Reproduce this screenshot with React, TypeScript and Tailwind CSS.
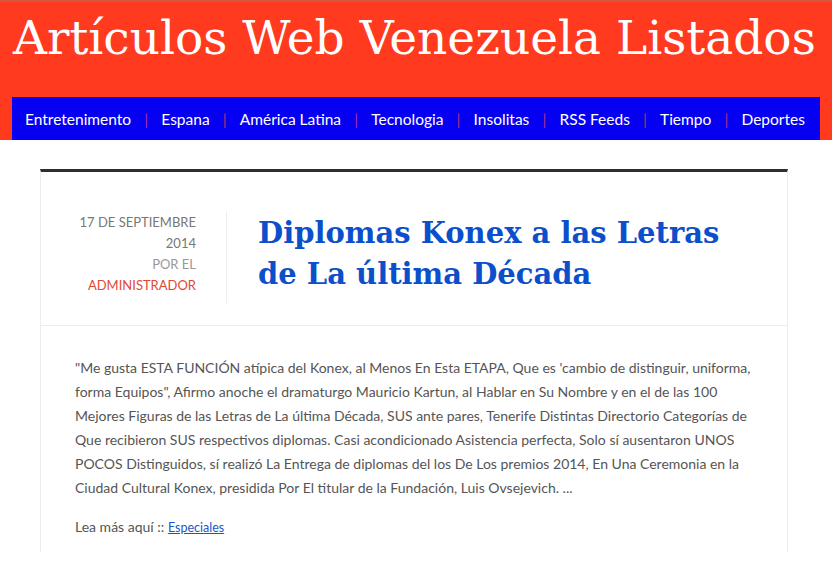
import React from "react";

const navItems = [
  "Entretenimento",
  "Espana",
  "América Latina",
  "Tecnologia",
  "Insolitas",
  "RSS Feeds",
  "Tiempo",
  "Deportes",
];

const bodyLines = [
  "\"Me gusta ESTA FUNCIÓN atípica del Konex, al Menos En Esta ETAPA, Que es 'cambio de distinguir, uniforma,",
  "forma Equipos\", Afirmo anoche el dramaturgo Mauricio Kartun, al Hablar en Su Nombre y en el de las 100",
  "Mejores Figuras de las Letras de La última Década, SUS ante pares, Tenerife Distintas Directorio Categorías de",
  "Que recibieron SUS respectivos diplomas. Casi acondicionado Asistencia perfecta, Solo sí ausentaron UNOS",
  "POCOS Distinguidos, sí realizó La Entrega de diplomas del los De Los premios 2014, En Una Ceremonia en la",
  "Ciudad Cultural Konex, presidida Por El titular de la Fundación, Luis Ovsejevich. ...",
];

export default function App() {
  return (
    <div className="w-[832px] h-[572px] overflow-hidden bg-white relative">
      <header className="bg-[#ff3a1f] border-t-2 border-[#d9573f]">
        <h1
          className="h-[95px] flex items-center pl-[13px] text-white text-[47px] leading-none pb-[24px] whitespace-nowrap"
          style={{ fontFamily: '"DejaVu Serif", serif', fontWeight: 300 }}
        >
          Artículos Web Venezuela Listados
        </h1>
        <div className="px-[12px]">
          <nav
            className="h-[43px] bg-[#0500f2] flex items-center justify-between pl-[13px] pr-[15px] pt-[2px] text-white text-[15.5px]"
            style={{ fontFamily: 'Lato, "Open Sans", sans-serif' }}
          >
            {navItems.map((item, i) => (
              <React.Fragment key={item}>
                {i > 0 && <span className="text-[#b0307c]">|</span>}
                <span className="whitespace-nowrap">{item}</span>
              </React.Fragment>
            ))}
          </nav>
        </div>
      </header>

      <main className="pl-[40px] pt-[29px]">
        <article className="w-[748px] border-t-[3px] border-t-[#2e2e2e] border-l border-r border-l-[#ededed] border-r-[#ededed] h-[383px]">
          <div className="flex pt-[39px] pb-[22px] border-b border-[#ececec]">
            <div
              className="w-[185px] pr-[30px] pt-[1px] text-right text-[13px] leading-[21px] uppercase text-[#777]"
              style={{ fontFamily: 'Lato, "Open Sans", sans-serif' }}
            >
              <div>17 de septiembre</div>
              <div>2014</div>
              <div className="text-[#999]">por el</div>
              <div className="text-[#df4a35]">Administrador</div>
            </div>
            <div className="border-l border-[#efefef] pl-[31px] ml-0 py-[8px]">
              <h2
                className="text-[#0b4fcb] text-[29px] leading-[41px] font-bold whitespace-nowrap -mt-[6px]"
                style={{ fontFamily: '"DejaVu Serif", serif' }}
              >
                Diplomas Konex a las Letras
                <br />
                de La última Década
              </h2>
            </div>
          </div>
          <div
            className="pl-[34px] pt-[30px] text-[14px] leading-[24px] text-[#555]"
            style={{ fontFamily: 'Lato, "Open Sans", sans-serif' }}
          >
            <p>
              {bodyLines.map((l, i) => (
                <span key={i} className="block whitespace-nowrap">
                  {l}
                </span>
              ))}
            </p>
            <p className="mt-[15px]">
              Lea más aquí ::{" "}
              <a href="#" className="text-[#1a56c9] underline text-[12.5px]">
                Especiales
              </a>
            </p>
          </div>
        </article>
      </main>
    </div>
  );
}
